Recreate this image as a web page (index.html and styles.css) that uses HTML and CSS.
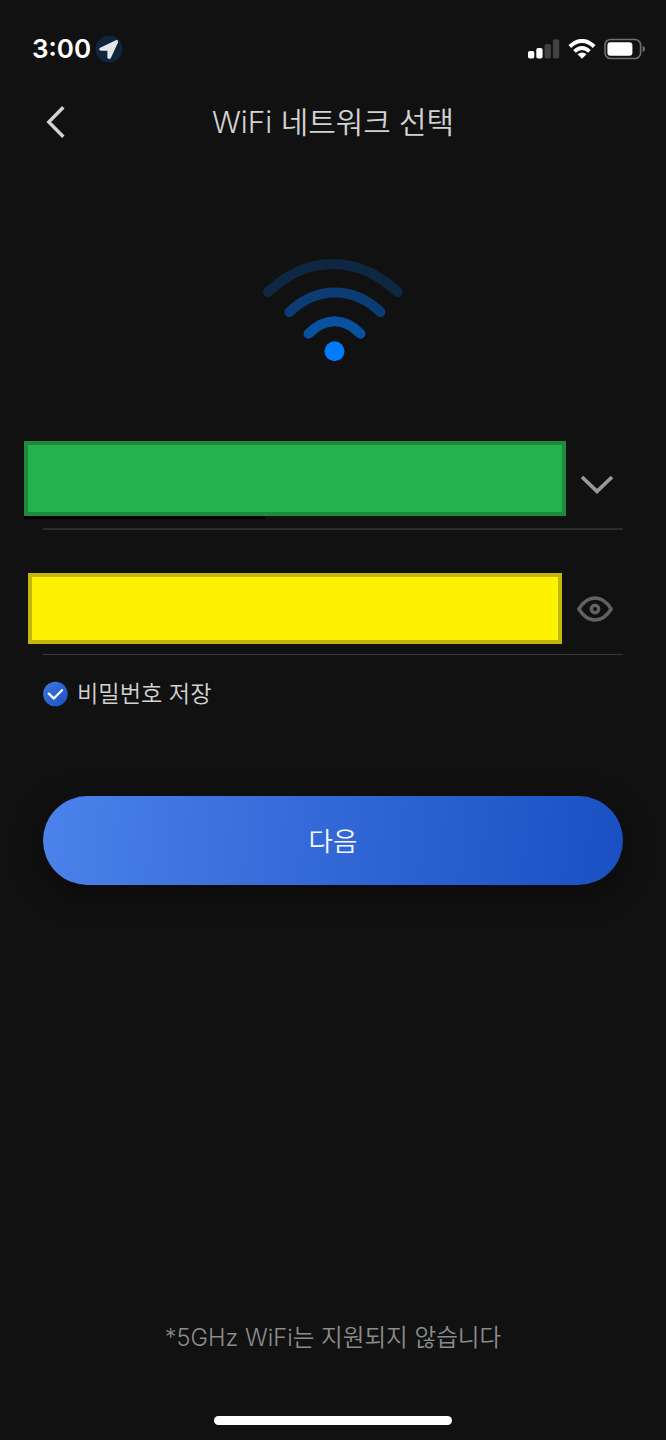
FILE: index.html
```html
<!DOCTYPE html>
<html lang="ko">
<head>
    <meta charset="UTF-8">
    <meta name="viewport" content="width=device-width, initial-scale=1.0">
    <title>WiFi 네트워크 선택</title>
    <link rel="stylesheet" href="styles.css">
</head>
<body>
    <div class="container">
        <div class="status-bar">
            <span class="time">3:00</span>
            <svg class="location" width="28" height="28" viewBox="0 0 28 28">
                <circle cx="14" cy="14" r="13.5" fill="#10263d"/>
                <path d="M5.2 12.8 L20.8 5.2 Q23.6 4.6 23 7.4 L16 22.8 Q14 25.4 12.4 22.8 V15.8 H5.6 Q3 14.6 5.2 12.8 Z" fill="#e4e6ea"/>
            </svg>
            <div class="status-icons">
                <svg width="32" height="20" viewBox="0 0 32 20">
                    <rect x="0" y="12" width="6.3" height="7.5" rx="1.8" fill="#fff"/>
                    <rect x="8.3" y="9" width="6.3" height="10.5" rx="1.8" fill="#fff"/>
                    <rect x="16.6" y="5" width="6.3" height="14.5" rx="1.8" fill="#414141"/>
                    <rect x="24.9" y="0.3" width="6.3" height="19.2" rx="1.8" fill="#414141"/>
                </svg>
                <svg class="status-wifi" width="28" height="20" viewBox="0 0 28 20">
                    <g fill="none" stroke="#fff" stroke-width="3.9">
                        <path d="M1.8 7.5 Q14 -3.6 26.2 7.5"/>
                        <path d="M6.5 12.4 Q14 5.6 21.5 12.4"/>
                    </g>
                    <path d="M9.5 15.2 Q14 11.6 18.5 15.2 L14 19.7 Z" fill="#fff"/>
                </svg>
                <svg class="battery" width="42" height="22" viewBox="0 0 42 22">
                    <rect x="1" y="1.5" width="35.6" height="19" rx="5.6" fill="none" stroke="#707070" stroke-width="1.6"/>
                    <rect x="3.4" y="4.2" width="25" height="13.6" rx="3" fill="#fff"/>
                    <path d="M38.7 7.8 Q41 8.8 41 11 Q41 13.2 38.7 14.2 Z" fill="#707070"/>
                </svg>
            </div>
        </div>

        <div class="header">
            <svg class="back" width="20" height="34" viewBox="0 0 20 34">
                <path d="M17.3 2.2 L2.8 17 L17.3 31.8" fill="none" stroke="#d2d2d2" stroke-width="3.4"/>
            </svg>
            <h1 class="title">WiFi 네트워크 선택</h1>
        </div>

        <svg class="wifi-logo" width="140" height="104" viewBox="0 0 140 104">
            <g fill="none" stroke-width="10" stroke-linecap="round">
                <path d="M5 34 C45 -3.3 94.5 -3.3 134.5 34" stroke="#0e2844"/>
                <path d="M26.3 54 C54 28 90 28 117.5 54" stroke="#0b3c73"/>
                <path d="M45.5 75.7 C62 59 81 59 97.5 75.7" stroke="#08519f"/>
            </g>
            <circle cx="71.5" cy="93.2" r="10" fill="#007aff"/>
        </svg>

        <div class="field network">
            <div class="mask mask-green"></div>
            <svg class="arrow-down" width="34" height="20" viewBox="0 0 34 20">
                <path d="M2 2 L17 16.4 L32 2" fill="none" stroke="#9a9a9a" stroke-width="3.6"/>
            </svg>
        </div>
        <div class="field password">
            <div class="mask mask-yellow"></div>
            <svg class="eye" width="38" height="28" viewBox="0 0 38 28">
                <g fill="none" stroke="#626262" stroke-width="3.4">
                    <path d="M2.8 14 C12 -0.7 26 -0.7 35.2 14 C26 28.7 12 28.7 2.8 14 Z" stroke-linejoin="round"/>
                    <circle cx="19" cy="14" r="3.7"/>
                </g>
            </svg>
        </div>

        <div class="remember">
            <svg width="26" height="26" viewBox="0 0 26 26">
                <defs>
                    <linearGradient id="check-bg" x1="0" y1="0" x2="1" y2="1">
                        <stop offset="0" stop-color="#4277de"/>
                        <stop offset="1" stop-color="#1a50c3"/>
                    </linearGradient>
                </defs>
                <circle cx="12.4" cy="13" r="12.3" fill="url(#check-bg)"/>
                <path d="M5.8 12.6 L10.8 17.5 L19 9.3" fill="none" stroke="#fff" stroke-width="2.3" stroke-linecap="round"/>
            </svg>
            <span class="remember-text">비밀번호 저장</span>
        </div>

        <button class="next-btn">다음</button>

        <p class="tip">*5GHz WiFi는 지원되지 않습니다</p>
        <div class="home-bar"></div>
    </div>
</body>
</html>
```

FILE: styles.css
```css
/* reset */
html, body {
    height: 100%;
    margin: 0;
}
h1, p {
    margin: 0;
}
svg {
    display: block;
    flex: none;
}

.container {
    height: 1440px;
    box-sizing: border-box;
    padding-top: 28px;
    display: flex;
    flex-direction: column;
    overflow: hidden;
    background: #111;
    color: #d2d2d2;
    font-family: Inter, "Noto Sans CJK KR", sans-serif;
    font-weight: 350;
}

/* status bar */
.status-bar {
    height: 41px;
    padding: 0 19px 0 32px;
    display: flex;
    align-items: center;
}
.time {
    width: 63px;
    font-size: 26px;
    font-weight: 600;
    color: #fff;
    white-space: nowrap;
}
.status-icons {
    margin-left: auto;
    display: flex;
    align-items: center;
}
.status-wifi {
    margin-left: 8px;
}
.battery {
    margin-left: 8px;
    margin-right: 1px;
}

/* header */
.header {
    height: 106px;
    padding: 0 46px;
    display: grid;
    grid-template-columns: 20px 1fr 20px;
    align-items: center;
}
.title {
    font-size: 29.9px;
    font-weight: inherit;
    line-height: 40px;
    text-align: center;
    white-space: nowrap;
}

.wifi-logo {
    margin: 83px 0 0 263px;
}

/* fields */
.field {
    margin: 0 43px;
    display: flex;
    align-items: center;
    box-sizing: border-box;
}
.network {
    height: 89px;
    margin-top: 79px;
    padding-bottom: 12px;
    border-bottom: 2px solid #2b2b2e;
}
.password {
    height: 82px;
    margin-top: 43px;
    padding-bottom: 10px;
    border-bottom: 1px solid #38383b;
}
.mask {
    box-sizing: border-box;
    flex: none;
}
.mask-green {
    width: 542px;
    height: 75px;
    margin-left: -19px;
    border: 4px solid #1f8a3e;
    background: #24b24e;
    position: relative;
}
/* dark strip under the left half */
.mask-green::after {
    content: "";
    position: absolute;
    left: -4px;
    top: 71px;
    width: 241px;
    height: 3px;
    background: #000;
}
.mask-yellow {
    width: 534px;
    height: 71px;
    margin-left: -15px;
    border: 4px solid #c3b70d;
    background: #fff200;
}
.arrow-down {
    margin: 12px 0 0 14px;
}
.eye {
    margin-left: 14px;
}

.remember {
    height: 30px;
    margin: 24px 43px 0;
    display: flex;
    align-items: center;
}
.remember-text {
    margin-left: 8px;
    font-size: 23.2px;
    line-height: 30px;
    white-space: nowrap;
}

.next-btn {
    height: 89px;
    margin: 87px 43px 0;
    padding: 0 0 3px;
    flex: none;
    border: 0;
    border-radius: 45px;
    background: linear-gradient(95deg, #4c82eb, #3267d6 50%, #1a50c2);
    box-shadow: 0 8px 32px rgba(0, 0, 0, 0.45);
    color: #f4f7ff;
    font-family: inherit;
    font-size: 26.5px;
    font-weight: inherit;
}

.tip {
    margin-top: auto;
    font-size: 23.6px;
    line-height: 34px;
    text-align: center;
    color: #8c8c8c;
    white-space: nowrap;
}
.home-bar {
    width: 238px;
    height: 9px;
    flex: none;
    margin: 61px auto 15px;
    border-radius: 5px;
    background: #fff;
}
```
